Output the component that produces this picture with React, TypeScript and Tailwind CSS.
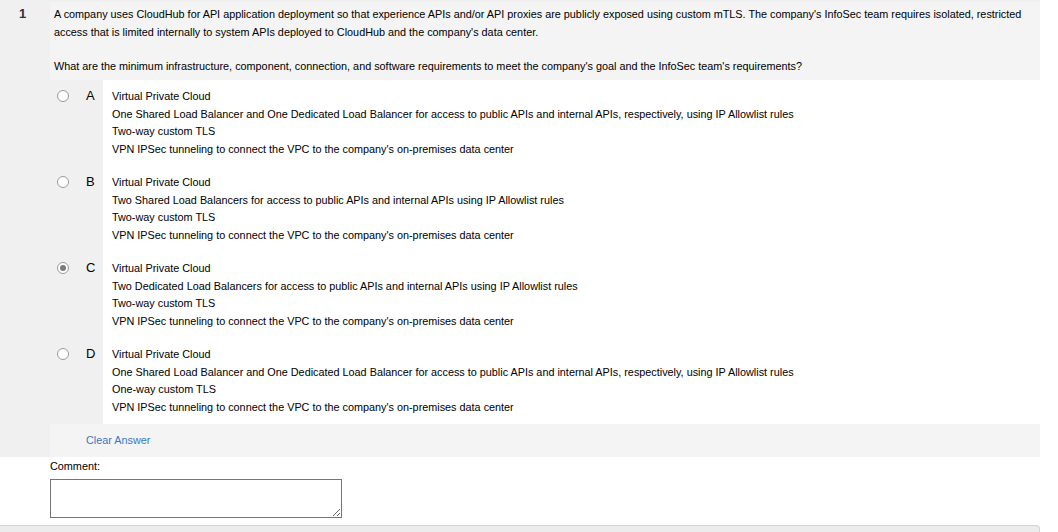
import React from "react"

const question = [
  "A company uses CloudHub for API application deployment so that experience APIs and/or API proxies are publicly exposed using custom mTLS. The company's InfoSec team requires isolated, restricted access that is limited internally to system APIs deployed to CloudHub and the company's data center.",
  "What are the minimum infrastructure, component, connection, and software requirements to meet the company's goal and the InfoSec team's requirements?",
]

const options = [
  {
    letter: "A",
    lines: [
      "Virtual Private Cloud",
      "One Shared Load Balancer and One Dedicated Load Balancer for access to public APIs and internal APIs, respectively, using IP Allowlist rules",
      "Two-way custom TLS",
      "VPN IPSec tunneling to connect the VPC to the company's on-premises data center",
    ],
  },
  {
    letter: "B",
    lines: [
      "Virtual Private Cloud",
      "Two Shared Load Balancers for access to public APIs and internal APIs using IP Allowlist rules",
      "Two-way custom TLS",
      "VPN IPSec tunneling to connect the VPC to the company's on-premises data center",
    ],
  },
  {
    letter: "C",
    checked: true,
    lines: [
      "Virtual Private Cloud",
      "Two Dedicated Load Balancers for access to public APIs and internal APIs using IP Allowlist rules",
      "Two-way custom TLS",
      "VPN IPSec tunneling to connect the VPC to the company's on-premises data center",
    ],
  },
  {
    letter: "D",
    lines: [
      "Virtual Private Cloud",
      "One Shared Load Balancer and One Dedicated Load Balancer for access to public APIs and internal APIs, respectively, using IP Allowlist rules",
      "One-way custom TLS",
      "VPN IPSec tunneling to connect the VPC to the company's on-premises data center",
    ],
  },
]

function Radio({ checked }: { checked?: boolean }) {
  return (
    <span className="flex h-[12px] w-[12px] items-center justify-center rounded-full border border-[#9a9a9a] bg-white">
      {checked && <span className="h-[6px] w-[6px] rounded-full bg-[#7a7a7a]" />}
    </span>
  )
}

export default function App() {
  return (
    <div className="h-[532px] w-[1058px] overflow-hidden bg-white font-['Liberation_Sans',Arial,sans-serif] text-[10.83px] text-black">
      <div className="flex w-[1040px] bg-[#f0f0f0]">
        <div className="w-[50px] shrink-0 pt-[5px] pl-[19px] text-[13px] font-bold leading-[18px] text-[#333]">1</div>
        <div className="flex-1">
          {/* question */}
          <div className="mt-[2px] bg-[#f4f4f4] px-[4px] pt-[3px] pb-[5px] leading-[18px]">
            <p>{question[0]}</p>
            <p className="mt-[16px]">{question[1]}</p>
          </div>

          {/* answers */}
          {options.map((opt) => (
            <div key={opt.letter} className="flex h-[86px]">
              <div className="flex w-[53px] shrink-0 items-start pt-[10px] pl-[7px]">
                <Radio checked={opt.checked} />
                <span className="ml-[17px] -mt-[3px] text-[13px] leading-[18px]">{opt.letter}</span>
              </div>
              <div className="flex-1 bg-white pt-[8px] pl-[9px] leading-[17.5px]">
                {opt.lines.map((line) => (
                  <div key={line}>{line}</div>
                ))}
              </div>
            </div>
          ))}

          <div className="flex h-[33px] items-center bg-[#f4f4f4] pl-[36px]">
            <span className="text-[#3a78c0]">Clear Answer</span>
          </div>
        </div>
      </div>

      <div className="pl-[50px]">
        <div className="pt-[2px] leading-[14px]">Comment:</div>
        <textarea className="mt-[6px] block h-[39px] w-[292px] resize border border-[#767676] bg-white" />
      </div>

      <div className="mt-[7px] h-[12px] w-[1040px] rounded-tr-[4px] border-t border-r border-[#d4d4d4] bg-[#ececec]" />
    </div>
  )
}
